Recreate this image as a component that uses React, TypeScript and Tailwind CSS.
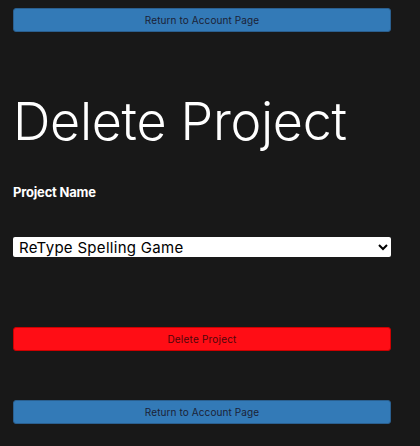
export default function App() {
  return (
    <main className="min-h-[446px] bg-[#181818] pt-2 pl-[13px] font-['Inter',sans-serif]">
      <button className="block h-6 w-[378px] rounded-[3px] border border-[#2a5f8f] bg-[#337ab7] text-[10px] tracking-[0.1px] text-[#1b2236]">
        Return to Account Page
      </button>

      <h1 className="mt-[58px] text-[52px] font-light leading-[64px] tracking-[-0.3px] text-white">
        Delete Project
      </h1>

      <label className="mt-[28px] block text-[13px] font-bold leading-5 tracking-[-0.2px] text-white">
        Project Name
      </label>

      <select className="mt-[35px] block h-5 w-[378px] rounded-[2px] bg-white px-[2px] text-[15px] leading-5 tracking-[0.3px] text-black">
        <option>ReType Spelling Game</option>
      </select>

      <button className="mt-[70px] block h-6 w-[378px] rounded-[3px] border border-[#c00] bg-[#ff0d15] text-[10px] tracking-[0.2px] text-[#50060a]">
        Delete Project
      </button>

      <button className="mt-[49px] block h-6 w-[378px] rounded-[3px] border border-[#2a5f8f] bg-[#337ab7] text-[10px] tracking-[0.1px] text-[#1b2236]">
        Return to Account Page
      </button>
    </main>
  );
}
